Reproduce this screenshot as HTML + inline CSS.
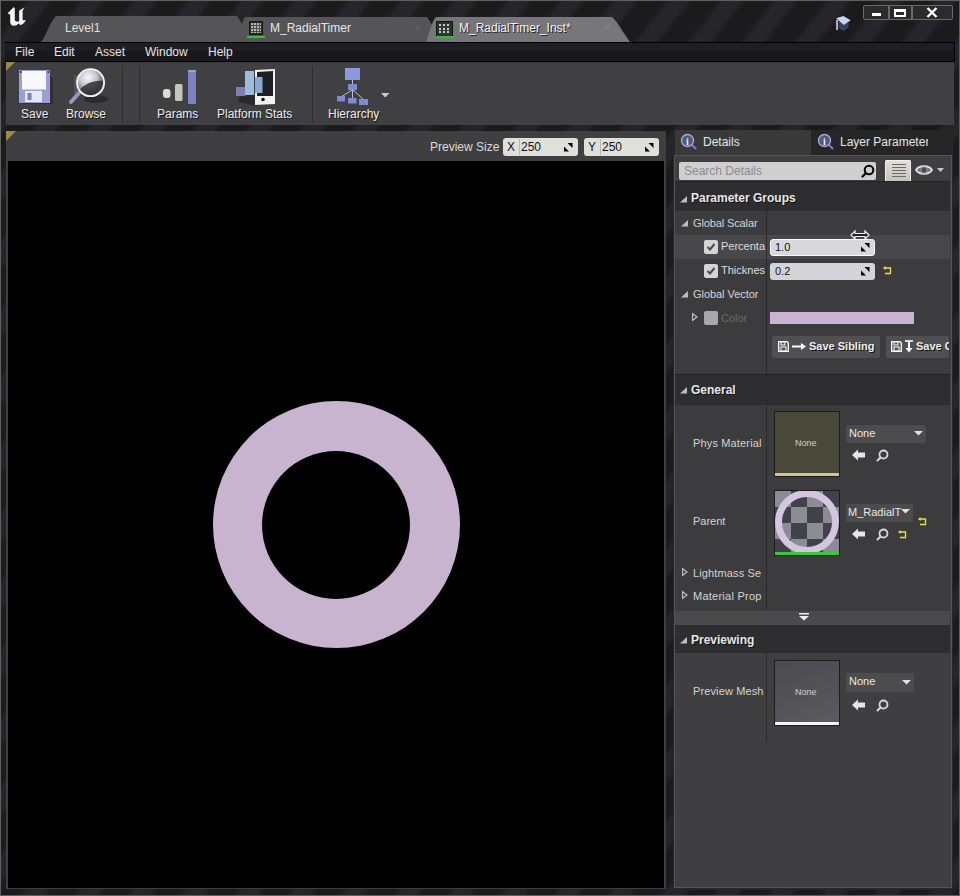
<!DOCTYPE html>
<html><head><meta charset="utf-8">
<style>
*{margin:0;padding:0;box-sizing:border-box}
html,body{width:960px;height:896px;overflow:hidden;background:#1c1c1c}
body{position:relative;font-family:"Liberation Sans",sans-serif;color:#dcdcdc;font-size:12px}
.a{position:absolute}
.t{position:absolute;white-space:nowrap;line-height:1}
svg{position:absolute;overflow:visible}
</style></head><body>
<!-- outer frame -->
<div class="a" style="left:0;top:0;width:960px;height:896px;background:repeating-linear-gradient(128deg,#1b1b1e 0px,#1b1b1e 18px,#25252a 24px,#25252a 36px,#1b1b1e 42px);border:1px solid #60605c"></div>

<!-- UE logo -->
<svg style="left:0;top:0" width="30" height="30" viewBox="0 0 30 30">
<path d="M7.5 13.5 L13.8 7 L14.8 8.5 L14.8 20.5 Q16.5 22.5 19.2 21 L19.2 10.5 L24.5 7.5 L22.6 10.8 L22.6 19.8 Q24 20.8 26 19.8 Q24 24 20.5 25.2 L18.6 23.6 Q16 26.6 12.2 25.6 Q10 24.6 10.2 22 L10.2 14.5 Z" fill="#f6f6f6"/>
</svg>
<!-- title tabs -->
<svg style="left:0;top:0" width="700" height="45" viewBox="0 0 700 45">
<path d="M41 42 C46 36, 50 22, 56 16 L237 16 C241 20, 246 34, 250 42 Z" fill="#555557"/>
<path d="M236 42 C239 36, 241 22, 245 17 L427 17 C431 21, 436 34, 440 42 Z" fill="#555557"/>
<path d="M426 42 C429 36, 431 22, 436 17 L612 17 C617 21, 624 34, 630 42 Z" fill="#77777b"/>
</svg>
<div class="t" style="left:65px;top:22px;font-size:12px;color:#e0e0e0">Level1</div>

<div class="a" style="left:249px;top:21px;width:14px;height:14px;background:#262a26;border:1px solid #1a1a1a"></div>
<div class="a" style="left:251px;top:23px;width:10px;height:10px;background-color:#b8b8b0;background-image:repeating-linear-gradient(90deg,transparent 0 2px,#4a4a48 2px 3px),repeating-linear-gradient(180deg,transparent 0 2px,#4a4a48 2px 3px)"></div>
<div class="a" style="left:247px;top:36px;width:18px;height:2px;background:#38c038"></div>
<div class="t" style="left:270px;top:22px;font-size:12px;color:#e6e6e6">M_RadialTimer</div>
<div class="t" style="left:414px;top:22px;font-size:11px;color:#666">×</div>

<div class="a" style="left:436px;top:21px;width:17px;height:16px;background:#26342c;border:1px solid #141414"></div>
<div class="a" style="left:439px;top:24px;width:11px;height:10px;background-color:#c8c8c8;background-image:repeating-linear-gradient(90deg,transparent 0 2.5px,#2e3a32 2.5px 4px),repeating-linear-gradient(180deg,transparent 0 2px,#2e3a32 2px 3.5px)"></div>
<div class="a" style="left:436px;top:36px;width:17px;height:1.5px;background:#2fbf2f"></div>
<div class="t" style="left:459px;top:22px;font-size:12px;color:#f4f4f4;text-shadow:1px 1px 0 #222">M_RadialTimer_Inst*</div>
<div class="t" style="left:604px;top:22px;font-size:11px;color:#888">×</div>

<!-- graduation cap -->
<svg style="left:830px;top:8px" width="24" height="26" viewBox="0 0 24 26">
<path d="M8.5 13 L13.75 16.9 L18.5 13.5 L18.5 19.5 L13.5 23 L8.5 20 Z" fill="#34445e"/>
<path d="M6 10.3 L13.4 8.1 L20.6 12.2 L13.75 16.9 Z" fill="#c8d6f4"/>
<path d="M7 12 L7 22" stroke="#d8d8d0" stroke-width="1.6"/>
</svg>
<!-- window buttons -->
<div class="a" style="left:863px;top:5px;width:26px;height:15px;background:#2b2b2b;border:1px solid #6a6a6a;border-radius:2px 0 0 2px"></div>
<div class="a" style="left:872px;top:13px;width:9px;height:3px;background:#fff"></div>
<div class="a" style="left:889px;top:5px;width:23px;height:15px;background:#2b2b2b;border:1px solid #6a6a6a"></div>
<div class="a" style="left:894px;top:9px;width:12px;height:8px;border:2px solid #fff;border-top-width:3px"></div>
<div class="a" style="left:912px;top:5px;width:41px;height:15px;background:#2b2b2b;border:1px solid #6a6a6a;border-radius:0 2px 2px 0"></div>
<svg style="left:926px;top:7px" width="12" height="11" viewBox="0 0 12 11"><path d="M1.5 1 L10.5 10 M10.5 1 L1.5 10" stroke="#fff" stroke-width="2.4"/></svg>

<!-- menu bar -->
<div class="a" style="left:5px;top:42px;width:950px;height:20px;background:linear-gradient(#1e1e26 0,#1e1e26 7px,#19191d 8px);border-top:1px solid #000;border-bottom:1px solid #000;border-right:1px solid #000"></div>
<div class="t" style="left:15px;top:46px;color:#e4e4e4">File</div>
<div class="t" style="left:54px;top:46px;color:#e4e4e4">Edit</div>
<div class="t" style="left:95px;top:46px;color:#e4e4e4">Asset</div>
<div class="t" style="left:145px;top:46px;color:#e4e4e4">Window</div>
<div class="t" style="left:208px;top:46px;color:#e4e4e4">Help</div>

<!-- toolbar -->
<div class="a" style="left:6px;top:62px;width:948px;height:63px;background:#404043"></div>
<div class="a" style="left:6px;top:62px;width:9px;height:9px;background:#9a8a4a;clip-path:polygon(0 0,100% 0,0 100%)"></div>
<div class="a" style="left:122px;top:66px;width:1px;height:57px;background:#2e2e30"></div>
<div class="a" style="left:139px;top:66px;width:1px;height:57px;background:#2e2e30"></div>
<div class="a" style="left:312px;top:66px;width:1px;height:57px;background:#2e2e30"></div>

<!-- save icon -->
<svg style="left:0;top:0" width="400" height="130" viewBox="0 0 400 130">
<defs>
<radialGradient id="lens" cx="0.4" cy="0.3" r="0.75"><stop offset="0" stop-color="#f8f8fc"/><stop offset="0.45" stop-color="#c4c4cc"/><stop offset="0.8" stop-color="#606068"/><stop offset="1" stop-color="#404044"/></radialGradient>
<linearGradient id="gl" x1="0" y1="0" x2="1" y2="1"><stop offset="0" stop-color="#f4f4fa"/><stop offset="0.45" stop-color="#c8c8d0"/><stop offset="0.55" stop-color="#505058"/><stop offset="1" stop-color="#2a2a2e"/></linearGradient>
</defs>
<path d="M19 70 L49 70 L50 71 L50 103 L19 103 Z" fill="#9aa0d6"/>
<rect x="22" y="71" width="24" height="18.5" fill="#f8f8fc"/>
<rect x="25" y="91" width="17" height="11" fill="#e8e8f0"/>
<rect x="27.5" y="93" width="4" height="7" fill="#7880c0"/>
<rect x="20" y="71" width="1.5" height="2" fill="#333"/><rect x="47.5" y="71" width="1.5" height="2" fill="#333"/>
<path d="M50 76 L53 78 L53 104 L22 104 L19 103 L50 103Z" fill="#222" opacity="0.5"/>
<!-- browse -->
<ellipse cx="96" cy="99" rx="12" ry="4" fill="#1a1a1c" opacity="0.55"/>
<rect x="74" y="75" width="6" height="20" fill="#6a6a70" opacity="0.5"/>
<path d="M79 93 L71 102" stroke="#9496c0" stroke-width="4" stroke-linecap="round"/>
<circle cx="90.6" cy="82.7" r="13" fill="url(#lens)"/>
<path d="M80 90 C84 84, 94 80, 103.5 81 C102 90, 96 95.5, 90 95.7 C85 95.5, 82 93, 80 90Z" fill="#303034" opacity="0.85"/>
<circle cx="90.6" cy="82.7" r="13.5" fill="none" stroke="#f4f4f4" stroke-width="1.8"/>
<!-- params -->
<rect x="163" y="89" width="7.5" height="9" rx="3" fill="#dcdcd4"/>
<rect x="175" y="84" width="7.5" height="17" rx="1.5" fill="#c4c4be"/>
<rect x="188" y="70" width="8" height="34" fill="#7a82c2"/>
<rect x="188" y="70" width="8" height="2" fill="#9aa2e0"/>
<!-- platform stats -->
<path d="M240 96 L262 94 L276 100 L256 106 L238 102Z" fill="#1a1a1c" opacity="0.6"/>
<path d="M255 70 L275 69 L275 104 L255 105 Z" fill="#f2f2f2"/>
<path d="M257 72 L273 71 L273 96 L257 96 Z" fill="#1e1e24"/>
<circle cx="263" cy="99.5" r="1.8" fill="#111"/>
<rect x="236" y="87" width="9" height="9" fill="#7a80b0"/>
<rect x="245" y="71" width="9" height="24" fill="#9cbcdc"/>
<rect x="255" y="77" width="7.5" height="16" fill="#8aaad4"/>
<!-- hierarchy -->
<path d="M352.5 80 L352.5 84 M352.5 90 L352.5 98 M352 90 L341 97 M353 90 L364 100" stroke="#c0c0d0" stroke-width="1"/>
<rect x="345" y="68" width="15" height="12" fill="#8c98e0"/>
<rect x="348" y="84" width="9" height="6" fill="#7e8ad4"/>
<rect x="337" y="96" width="8" height="5.5" fill="#7e8ad4"/>
<rect x="348" y="98" width="8.5" height="5.5" fill="#7e8ad4"/>
<rect x="359" y="99" width="9" height="6" fill="#7e8ad4"/>
<path d="M381 93 L389.5 93 L385.2 97.5Z" fill="#c8c8c8"/>
</svg>
<div class="t" style="left:21px;top:108px;color:#ececec;text-shadow:1px 1px 0 #181818">Save</div>
<div class="t" style="left:66px;top:108px;color:#ececec;text-shadow:1px 1px 0 #181818">Browse</div>
<div class="t" style="left:157px;top:108px;color:#ececec;text-shadow:1px 1px 0 #181818">Params</div>
<div class="t" style="left:217px;top:108px;color:#ececec;text-shadow:1px 1px 0 #181818">Platform Stats</div>
<div class="t" style="left:328px;top:108px;color:#ececec;text-shadow:1px 1px 0 #181818">Hierarchy</div>

<!-- viewport panel -->
<div class="a" style="left:6px;top:131px;width:660px;height:758px;background:#3f3f41"></div>
<div class="a" style="left:6px;top:131px;width:10px;height:10px;background:#9a8a4a;clip-path:polygon(0 0,100% 0,0 100%)"></div>
<div class="a" style="left:8px;top:161px;width:656px;height:727px;background:#000"></div>
<div class="t" style="left:430px;top:141px;color:#dcdcdc">Preview Size</div>
<div class="a" style="left:503px;top:138px;width:75px;height:18px;background:#e0e0da;border-radius:3px"></div><div class="a" style="left:519px;top:139px;width:1px;height:16px;background:#b8b8b4"></div>
<div class="a" style="left:584px;top:138px;width:75px;height:18px;background:#e0e0da;border-radius:3px"></div><div class="a" style="left:600px;top:139px;width:1px;height:16px;background:#b8b8b4"></div>
<div class="t" style="left:507px;top:141px;color:#111">X</div>
<div class="t" style="left:521px;top:141px;color:#111">250</div>
<div class="t" style="left:588px;top:141px;color:#111">Y</div>
<div class="t" style="left:602px;top:141px;color:#111">250</div>
<svg style="left:564px;top:143px" width="9" height="9" viewBox="0 0 9 9"><path d="M3.5 0 L8.5 0 L8.5 5Z M0 3.5 L0 8.5 L5 8.5Z" fill="#000"/></svg>
<svg style="left:645px;top:143px" width="9" height="9" viewBox="0 0 9 9"><path d="M3.5 0 L8.5 0 L8.5 5Z M0 3.5 L0 8.5 L5 8.5Z" fill="#000"/></svg>

<!-- ring -->
<div class="a" style="left:213px;top:401px;width:247px;height:247px;border-radius:50%;background:#c8b4cf"></div>
<div class="a" style="left:262px;top:451px;width:148px;height:148px;border-radius:50%;background:#000"></div>

<!-- details panel -->
<div class="a" style="left:673px;top:130px;width:280px;height:760px;background:#262627"></div>
<div class="a" style="left:675px;top:130px;width:136px;height:25px;background:#39393a"></div>
<div class="a" style="left:674px;top:155px;width:278px;height:733px;background:#3f3f41;border:1px solid #555557"></div>
<svg style="left:680px;top:133px" width="18" height="18" viewBox="0 0 18 18"><path d="M12 12 L15.5 15.5" stroke="#7a80d0" stroke-width="2" stroke-linecap="round"/><circle cx="7.5" cy="7.5" r="6" fill="#55587a" stroke="#a4a8dc" stroke-width="1.4"/><text x="7.5" y="11.5" font-size="10" font-weight="bold" text-anchor="middle" fill="#f4f4f4" font-family="Liberation Serif">i</text></svg>
<div class="t" style="left:703px;top:136px;color:#e6e6e6">Details</div>
<svg style="left:817px;top:133px" width="18" height="18" viewBox="0 0 18 18"><path d="M12 12 L15.5 15.5" stroke="#7a80d0" stroke-width="2" stroke-linecap="round"/><circle cx="7.5" cy="7.5" r="6" fill="#55587a" stroke="#a4a8dc" stroke-width="1.4"/><text x="7.5" y="11.5" font-size="10" font-weight="bold" text-anchor="middle" fill="#f4f4f4" font-family="Liberation Serif">i</text></svg>
<div class="a" style="left:838px;top:130px;width:90px;height:24px;overflow:hidden"><div class="t" style="left:2px;top:6px;color:#e6e6e6">Layer Parameters</div></div>

<!-- search row -->
<div class="a" style="left:679px;top:162px;width:197px;height:18px;background:#cfcfd0;border-radius:2px"></div>
<div class="t" style="left:684px;top:165px;color:#8c8c90">Search Details</div>
<svg style="left:861px;top:164px" width="14" height="14" viewBox="0 0 14 14"><circle cx="8" cy="6" r="4.3" fill="none" stroke="#000" stroke-width="2"/><path d="M5 9 L1.5 12.5" stroke="#000" stroke-width="2.4" stroke-linecap="round"/></svg>
<div class="a" style="left:885px;top:160px;width:26px;height:22px;background:linear-gradient(#e0e0d8,#c4c4bc);border:1px solid #eee;border-radius:1px"></div>
<div class="a" style="left:892px;top:164px;width:14px;height:14px;background:repeating-linear-gradient(180deg,#6a6a62 0 1.5px,transparent 1.5px 3px)"></div>
<svg style="left:915px;top:163px" width="30" height="14" viewBox="0 0 30 14"><path d="M1 7 C4 2, 14 2, 17 7 C14 12, 4 12, 1 7Z" fill="#707078" stroke="#e0e0e0" stroke-width="1.8"/><circle cx="9" cy="7" r="3.2" fill="#4a4a5a" stroke="#9a9aa8" stroke-width="1"/><path d="M22 5 L29 5 L25.5 9Z" fill="#c8c8c8"/></svg>

<div class="a" style="left:675px;top:211px;width:275px;height:164px;background:#3c3c3e"></div>
<div class="a" style="left:675px;top:235px;width:275px;height:24px;background:#48484a"></div>
<!-- Parameter Groups header -->
<div class="a" style="left:675px;top:181px;width:275px;height:1px;background:#222"></div>
<div class="a" style="left:675px;top:182px;width:275px;height:29px;background:#2e2e31"></div>
<div class="a" style="left:766px;top:182px;width:1px;height:192px;background:#2a2a2c"></div>
<svg style="left:680px;top:196px" width="8" height="7" viewBox="0 0 8 7"><path d="M7 0 L7 6.5 L0 6.5Z" fill="#bdbdbd"/></svg>
<div class="t" style="left:691px;top:192px;font-size:12px;font-weight:bold;color:#e8e8e8;text-shadow:1px 1px 0 #111">Parameter Groups</div>

<!-- rows bg -->

<svg style="left:681px;top:220px" width="8" height="7" viewBox="0 0 8 7"><path d="M7 0 L7 6.5 L0 6.5Z" fill="#bdbdbd"/></svg>
<div class="t" style="left:693px;top:218px;font-size:11px;color:#d4d4d4;letter-spacing:-0.12px">Global Scalar</div>

<div class="a" style="left:704px;top:240px;width:14px;height:14px;background:#d4d4d4;border-radius:2px"></div>
<svg style="left:706px;top:242px" width="10" height="10" viewBox="0 0 10 10"><path d="M1.5 5 L4 7.5 L8.5 2" fill="none" stroke="#4a4a4a" stroke-width="2"/></svg>
<div class="t" style="left:721px;top:241px;font-size:11px;color:#dcdcdc">Percenta</div>
<div class="a" style="left:770px;top:239px;width:105px;height:17px;background:#d8d8dc;border:1px solid #fafafa;border-radius:3px"></div>
<div class="t" style="left:775px;top:242px;font-size:11px;color:#111">1.0</div>
<svg style="left:861px;top:243px" width="9" height="9" viewBox="0 0 9 9"><path d="M3.5 0 L8.5 0 L8.5 5Z M0 3.5 L0 8.5 L5 8.5Z" fill="#000"/></svg>
<svg style="left:850px;top:229px" width="20" height="12" viewBox="0 0 20 12"><path d="M1 6 L5 2 L5 4.5 L15 4.5 L15 2 L19 6 L15 10 L15 7.5 L5 7.5 L5 10Z" fill="#222" stroke="#eee" stroke-width="1.2"/></svg>

<div class="a" style="left:704px;top:264px;width:14px;height:14px;background:#d4d4d4;border-radius:2px"></div>
<svg style="left:706px;top:266px" width="10" height="10" viewBox="0 0 10 10"><path d="M1.5 5 L4 7.5 L8.5 2" fill="none" stroke="#4a4a4a" stroke-width="2"/></svg>
<div class="t" style="left:721px;top:265px;font-size:11px;color:#dcdcdc">Thicknes</div>
<div class="a" style="left:770px;top:263px;width:105px;height:17px;background:#d4d4d8;border-radius:3px"></div>
<div class="t" style="left:775px;top:266px;font-size:11px;color:#111">0.2</div>
<svg style="left:861px;top:267px" width="9" height="9" viewBox="0 0 9 9"><path d="M3.5 0 L8.5 0 L8.5 5Z M0 3.5 L0 8.5 L5 8.5Z" fill="#000"/></svg>
<svg style="left:883px;top:266px" width="9" height="9" viewBox="0 0 9 9"><path d="M1 2 L7.5 2 L7.5 7.5 L2 7.5" fill="none" stroke="#e8e050" stroke-width="1.3"/><path d="M0 2 L2.5 0 L2.5 4Z" fill="#e8e050"/></svg>

<svg style="left:681px;top:291px" width="8" height="7" viewBox="0 0 8 7"><path d="M7 0 L7 6.5 L0 6.5Z" fill="#bdbdbd"/></svg>
<div class="t" style="left:693px;top:289px;font-size:11px;color:#d4d4d4;letter-spacing:-0.05px">Global Vector</div>

<svg style="left:692px;top:313px" width="7" height="9" viewBox="0 0 7 9"><path d="M0.6 0.6 L5 4 L0.6 7.4Z" fill="none" stroke="#c8c8c8" stroke-width="1.1"/></svg>
<div class="a" style="left:704px;top:311px;width:14px;height:14px;background:#a8a8a8;border-radius:2px"></div>
<div class="t" style="left:721px;top:313px;font-size:11px;color:#6a6a6a">Color</div>
<div class="a" style="left:770px;top:312px;width:144px;height:12px;background:#c8b4d0"></div>

<div class="a" style="left:772px;top:336px;width:108px;height:22px;background:#505052;border-radius:2px"></div>
<svg style="left:778px;top:341px" width="11" height="11" viewBox="0 0 11 11"><path d="M0.7 0.7 L9 0.7 L10.3 2 L10.3 10.3 L0.7 10.3Z" fill="none" stroke="#fff" stroke-width="1.3"/><rect x="3" y="1" width="4" height="3" fill="none" stroke="#fff" stroke-width="1"/><rect x="3" y="6" width="5" height="4" fill="none" stroke="#fff" stroke-width="1"/></svg>
<svg style="left:792px;top:343px" width="15" height="7" viewBox="0 0 15 7"><path d="M0 3.5 L10 3.5" stroke="#fff" stroke-width="2"/><path d="M9 0 L14 3.5 L9 7Z" fill="#fff"/></svg>
<div class="t" style="left:809px;top:341px;font-size:11px;font-weight:bold;color:#f0f0f0;text-shadow:1px 1px 0 #111">Save Sibling</div>
<div class="a" style="left:886px;top:336px;width:63px;height:22px;background:#505052;border-radius:2px"></div>
<svg style="left:891px;top:341px" width="11" height="11" viewBox="0 0 11 11"><path d="M0.7 0.7 L9 0.7 L10.3 2 L10.3 10.3 L0.7 10.3Z" fill="none" stroke="#fff" stroke-width="1.3"/><rect x="3" y="1" width="4" height="3" fill="none" stroke="#fff" stroke-width="1"/><rect x="3" y="6" width="5" height="4" fill="none" stroke="#fff" stroke-width="1"/></svg>
<svg style="left:905px;top:340px" width="8" height="13" viewBox="0 0 8 13"><path d="M0 1 L8 1" stroke="#fff" stroke-width="1.6"/><path d="M4 1 L4 9" stroke="#fff" stroke-width="2"/><path d="M0.5 8 L7.5 8 L4 12.5Z" fill="#fff"/></svg>
<div class="a" style="left:914px;top:336px;width:35px;height:22px;overflow:hidden"><div class="t" style="left:2px;top:5px;font-size:11px;font-weight:bold;color:#f0f0f0;text-shadow:1px 1px 0 #111">Save Child</div></div>

<!-- General header -->
<div class="a" style="left:675px;top:374px;width:275px;height:1px;background:#222"></div>
<div class="a" style="left:675px;top:375px;width:275px;height:30px;background:#2e2e31"></div>
<div class="a" style="left:766px;top:375px;width:1px;height:30px;background:#2a2a2c"></div>
<svg style="left:680px;top:387px" width="8" height="7" viewBox="0 0 8 7"><path d="M7 0 L7 6.5 L0 6.5Z" fill="#bdbdbd"/></svg>
<div class="t" style="left:691px;top:384px;font-size:12px;font-weight:bold;color:#e8e8e8;text-shadow:1px 1px 0 #111">General</div>
<div class="a" style="left:675px;top:405px;width:275px;height:206px;background:#3c3c3e"></div>
<div class="a" style="left:766px;top:405px;width:1px;height:205px;background:#2a2a2c"></div>

<div class="t" style="left:693px;top:438px;font-size:11px;color:#d4d4d4;letter-spacing:0.15px">Phys Material</div>
<div class="a" style="left:774px;top:411px;width:66px;height:66px;background:#1c1c1c"></div>
<div class="a" style="left:775px;top:412px;width:64px;height:61px;background:#4a4838"></div>
<div class="a" style="left:775px;top:473px;width:64px;height:3px;background:#cfc88a"></div>
<div class="t" style="left:795px;top:439px;font-size:9px;color:#d0d0d0">None</div>
<div class="a" style="left:846px;top:425px;width:80px;height:18px;background:#4c4c4e;border-radius:2px"></div>
<div class="t" style="left:849px;top:428px;font-size:11px;color:#e8e8e8">None</div>
<svg style="left:914px;top:431px" width="10" height="6" viewBox="0 0 10 6"><path d="M0 0 L9 0 L4.5 4.5Z" fill="#e0e0e0"/></svg>
<svg style="left:852px;top:449px" width="14" height="12" viewBox="0 0 14 12"><path d="M0 6 L6 0.5 L6 3.5 L13 3.5 L13 8.5 L6 8.5 L6 11.5Z" fill="#e6e6e6"/></svg>
<svg style="left:876px;top:449px" width="13" height="13" viewBox="0 0 13 13"><circle cx="7.5" cy="5.5" r="4" fill="none" stroke="#d8d8d8" stroke-width="1.8"/><path d="M4.5 8.5 L1.5 11.5" stroke="#d8d8d8" stroke-width="2" stroke-linecap="round"/></svg>

<div class="t" style="left:693px;top:516px;font-size:11px;color:#d4d4d4">Parent</div>
<div class="a" style="left:774px;top:490px;width:66px;height:66px;background:#1c1c1c"></div>
<div class="a" style="left:775px;top:491px;width:64px;height:61px;background-color:#42424a;background-image:linear-gradient(90deg,#8c8c94 50%,transparent 50%),linear-gradient(90deg,transparent 50%,#8c8c94 50%);background-size:32px 16px,32px 16px;background-position:0 0,0 16px;background-repeat:repeat-x,repeat-x"></div>
<div class="a" style="left:775px;top:491px;width:64px;height:61px;background-image:linear-gradient(90deg,#8c8c94 50%,transparent 50%),linear-gradient(90deg,transparent 50%,#8c8c94 50%);background-size:32px 16px,32px 16px;background-position:0 32px,0 48px;background-repeat:repeat-x,repeat-x"></div>
<div class="a" style="left:775px;top:491px;width:64px;height:61px;overflow:hidden"><div class="a" style="left:0px;top:-1px;width:64px;height:64px;border-radius:50%;border:7px solid #d4c6de"></div></div>
<div class="a" style="left:775px;top:552px;width:64px;height:3px;background:#38c838"></div>
<div class="a" style="left:846px;top:504px;width:67px;height:18px;background:#4c4c4e;border-radius:2px"></div>
<div class="t" style="left:848px;top:507px;font-size:11px;color:#e8e8e8">M_RadialT</div>
<svg style="left:901px;top:509px" width="10" height="6" viewBox="0 0 10 6"><path d="M0 0 L9 0 L4.5 4.5Z" fill="#e0e0e0"/></svg>
<svg style="left:918px;top:517px" width="9" height="9" viewBox="0 0 9 9"><path d="M1 2 L7.5 2 L7.5 7.5 L2 7.5" fill="none" stroke="#e8e050" stroke-width="1.3"/><path d="M0 2 L2.5 0 L2.5 4Z" fill="#e8e050"/></svg>
<svg style="left:852px;top:528px" width="14" height="12" viewBox="0 0 14 12"><path d="M0 6 L6 0.5 L6 3.5 L13 3.5 L13 8.5 L6 8.5 L6 11.5Z" fill="#e6e6e6"/></svg>
<svg style="left:876px;top:528px" width="13" height="13" viewBox="0 0 13 13"><circle cx="7.5" cy="5.5" r="4" fill="none" stroke="#d8d8d8" stroke-width="1.8"/><path d="M4.5 8.5 L1.5 11.5" stroke="#d8d8d8" stroke-width="2" stroke-linecap="round"/></svg>
<svg style="left:898px;top:530px" width="9" height="9" viewBox="0 0 9 9"><path d="M1 2 L7.5 2 L7.5 7.5 L2 7.5" fill="none" stroke="#e8e050" stroke-width="1.3"/><path d="M0 2 L2.5 0 L2.5 4Z" fill="#e8e050"/></svg>

<svg style="left:682px;top:568px" width="7" height="9" viewBox="0 0 7 9"><path d="M0.6 0.6 L5 4 L0.6 7.4Z" fill="none" stroke="#c8c8c8" stroke-width="1.1"/></svg>
<div class="t" style="left:693px;top:568px;font-size:11px;color:#d4d4d4;letter-spacing:0.14px">Lightmass Se</div>
<svg style="left:682px;top:591px" width="7" height="9" viewBox="0 0 7 9"><path d="M0.6 0.6 L5 4 L0.6 7.4Z" fill="none" stroke="#c8c8c8" stroke-width="1.1"/></svg>
<div class="t" style="left:693px;top:591px;font-size:11px;color:#d4d4d4;letter-spacing:0.25px">Material Prop</div>

<!-- advanced bar -->
<div class="a" style="left:675px;top:611px;width:275px;height:14px;background:#4a4a4c"></div>
<svg style="left:799px;top:613px" width="10" height="8" viewBox="0 0 10 8"><path d="M0 0 L10 0 L10 1.5 L0 1.5Z M0 3 L10 3 L5 7.5Z" fill="#f0f0f0"/></svg>

<!-- Previewing header -->
<div class="a" style="left:675px;top:625px;width:275px;height:28px;background:#2e2e31"></div>
<svg style="left:680px;top:637px" width="8" height="7" viewBox="0 0 8 7"><path d="M7 0 L7 6.5 L0 6.5Z" fill="#bdbdbd"/></svg>
<div class="t" style="left:691px;top:634px;font-size:12px;font-weight:bold;color:#e8e8e8;text-shadow:1px 1px 0 #111">Previewing</div>
<div class="a" style="left:766px;top:625px;width:1px;height:117px;background:#2a2a2c"></div>

<div class="t" style="left:693px;top:686px;font-size:11px;color:#d4d4d4;letter-spacing:0.12px">Preview Mesh</div>
<div class="a" style="left:774px;top:660px;width:66px;height:66px;background:#1c1c1c"></div>
<div class="a" style="left:775px;top:661px;width:64px;height:61px;background:linear-gradient(160deg,#4c4c50 0%,#545458 60%,#5c5c60 100%)"></div>
<div class="a" style="left:775px;top:722px;width:64px;height:3px;background:#f4f4f4"></div>
<div class="t" style="left:795px;top:688px;font-size:9px;color:#d0d0d0">None</div>
<div class="a" style="left:846px;top:673px;width:68px;height:19px;background:#4c4c4e;border-radius:2px"></div>
<div class="t" style="left:849px;top:676px;font-size:11px;color:#e8e8e8">None</div>
<svg style="left:902px;top:680px" width="10" height="6" viewBox="0 0 10 6"><path d="M0 0 L9 0 L4.5 4.5Z" fill="#e0e0e0"/></svg>
<svg style="left:852px;top:699px" width="14" height="12" viewBox="0 0 14 12"><path d="M0 6 L6 0.5 L6 3.5 L13 3.5 L13 8.5 L6 8.5 L6 11.5Z" fill="#e6e6e6"/></svg>
<svg style="left:876px;top:699px" width="13" height="13" viewBox="0 0 13 13"><circle cx="7.5" cy="5.5" r="4" fill="none" stroke="#d8d8d8" stroke-width="1.8"/><path d="M4.5 8.5 L1.5 11.5" stroke="#d8d8d8" stroke-width="2" stroke-linecap="round"/></svg>
</body></html>
